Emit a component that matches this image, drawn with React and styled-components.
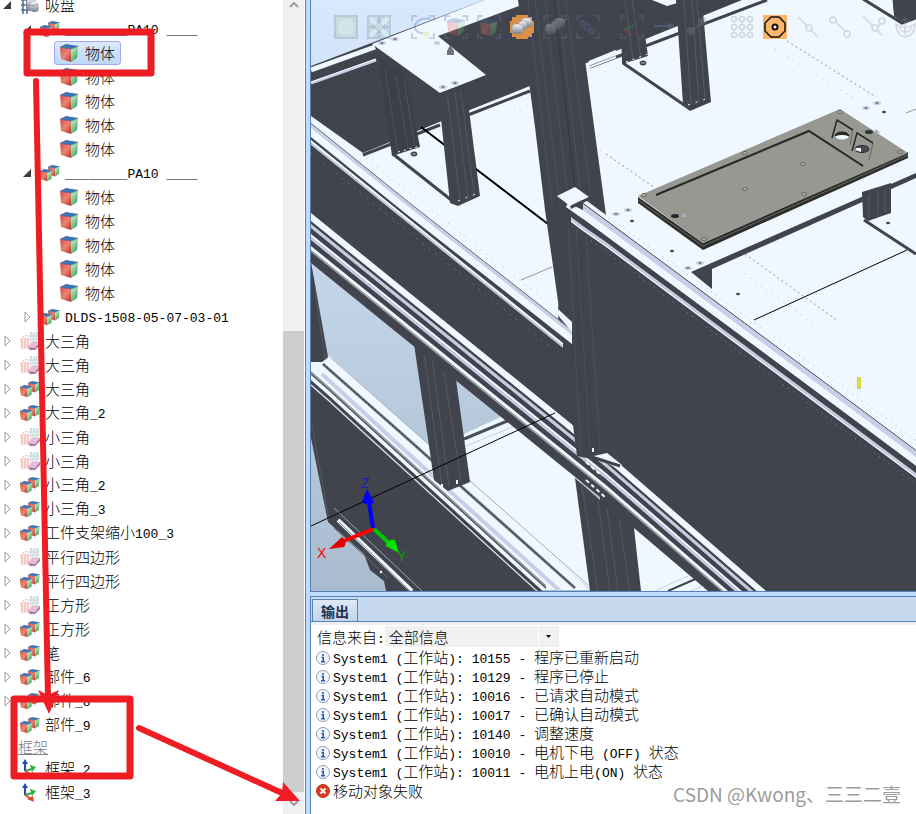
import React, { useState } from "react";
import styled, { createGlobalStyle } from "styled-components";

const treeItems = [
  { level: 0, arrow: "open", icon: "station", name: "吸盘" },
  { level: 1, arrow: "open", icon: "part", name: "________PA10 ____" },
  { level: 2, icon: "body", name: "物体" },
  { level: 2, icon: "body", name: "物体" },
  { level: 2, icon: "body", name: "物体" },
  { level: 2, icon: "body", name: "物体" },
  { level: 2, icon: "body", name: "物体" },
  { level: 1, arrow: "open", icon: "part", name: "________PA10 ____" },
  { level: 2, icon: "body", name: "物体" },
  { level: 2, icon: "body", name: "物体" },
  { level: 2, icon: "body", name: "物体" },
  { level: 2, icon: "body", name: "物体" },
  { level: 2, icon: "body", name: "物体" },
  { level: 1, arrow: "closed", icon: "part", name: "DLDS-1508-05-07-03-01" },
  { level: 0, arrow: "closed", icon: "hidden", name: "大三角" },
  { level: 0, arrow: "closed", icon: "hidden", name: "大三角" },
  { level: 0, arrow: "closed", icon: "part", name: "大三角" },
  { level: 0, arrow: "closed", icon: "part", name: "大三角_2" },
  { level: 0, arrow: "closed", icon: "hidden", name: "小三角" },
  { level: 0, arrow: "closed", icon: "hidden", name: "小三角" },
  { level: 0, arrow: "closed", icon: "part", name: "小三角_2" },
  { level: 0, arrow: "closed", icon: "part", name: "小三角_3" },
  { level: 0, arrow: "closed", icon: "part", name: "工件支架缩小100_3" },
  { level: 0, arrow: "closed", icon: "hidden", name: "平行四边形" },
  { level: 0, arrow: "closed", icon: "part", name: "平行四边形" },
  { level: 0, arrow: "closed", icon: "hidden", name: "正方形" },
  { level: 0, arrow: "closed", icon: "part", name: "正方形" },
  { level: 0, arrow: "closed", icon: "part", name: "笔" },
  { level: 0, arrow: "closed", icon: "part", name: "部件_6" },
  { level: 0, arrow: "closed", icon: "part", name: "部件_8" },
  { level: 0, icon: "part", name: "部件_9" },
];

const frameItems = [
  { level: 0, icon: "frame", name: "框架_2" },
  { level: 0, icon: "frame", name: "框架_3" },
];

const messages = [
  { type: "info", text: "System1 (工作站): 10155 - 程序已重新启动" },
  { type: "info", text: "System1 (工作站): 10129 - 程序已停止" },
  { type: "info", text: "System1 (工作站): 10016 - 已请求自动模式" },
  { type: "info", text: "System1 (工作站): 10017 - 已确认自动模式" },
  { type: "info", text: "System1 (工作站): 10140 - 调整速度" },
  { type: "info", text: "System1 (工作站): 10010 - 电机下电 (OFF) 状态" },
  { type: "info", text: "System1 (工作站): 10011 - 电机上电(ON) 状态" },
  { type: "error", text: "移动对象失败" },
];

const toolGroups = [
  ["view", "center"],
  ["curve", "surface", "body", "part", "mechanism", "group"],
  ["frame", "path", "target"],
  ["snapGrid", "snapCenter", "snapMid", "snapEnd", "snapEdge", "snapGravity"],
];

const dark = "#41444c";
const white = "#f0f8ff";
const lav = "#c9cde8";

// latin runs are set in a narrower mono face than the chinese ones
function MixedText({ children }) {
  return children
    .split(/([\x20-\x7e]+)/)
    .filter(Boolean)
    .map((run, i) =>
      /[\x20-\x7e]/.test(run) ? <Latin key={i}>{run}</Latin> : run
    );
}

function Cube({ x = 0, y = 0, s = 1 }) {
  return (
    <g transform={`translate(${x} ${y}) scale(${s})`}>
      <path d="M0 3 L6 0 L18 2 L11 5Z" fill="#3d74b0" />
      <path d="M0 3 L11 5 L11 18 L1 15Z" fill="url(#cubeRed)" />
      <path d="M11 5 L18 2 L17 14 L11 18Z" fill="url(#cubeGreen)" />
      <path d="M0 3 L11 5 L18 2" fill="none" stroke="#3a669c" strokeWidth="0.8" />
    </g>
  );
}

function SharedGradients() {
  return (
    <HiddenSvg aria-hidden="true">
      <defs>
        <linearGradient id="cubeRed" x1="0" y1="0" x2="1" y2="1">
          <stop offset="0" stopColor="#c9524c" />
          <stop offset="0.5" stopColor="#ee8272" />
          <stop offset="1" stopColor="#b03a34" />
        </linearGradient>
        <linearGradient id="cubeGreen" x1="0" y1="0" x2="0.6" y2="1">
          <stop offset="0" stopColor="#dff3dd" />
          <stop offset="0.6" stopColor="#7ccb86" />
          <stop offset="1" stopColor="#2f9a4c" />
        </linearGradient>
        <linearGradient id="metal" x1="0" y1="0" x2="0" y2="1">
          <stop offset="0" stopColor="#fafafa" />
          <stop offset="1" stopColor="#777c85" />
        </linearGradient>
      </defs>
    </HiddenSvg>
  );
}

function NodeIcon({ type }) {
  return (
    <svg width="20" height="20" viewBox="0 0 20 20" aria-hidden="true">
      {type === "body" && <Cube x={0} y={1} />}
      {type === "part" && (
        <>
          <Cube x={8} y={2} s={0.64} />
          <Cube x={0} y={6} s={0.68} />
        </>
      )}
      {type === "hidden" && (
        <>
          <path d="M0 7L9 6V17L1 18Z" fill="#fbe9e6" />
          <path d="M9 4L19 2V12L11 13Z" fill="#eaf3ee" />
          <g fill="none" strokeWidth="1" strokeDasharray="2 1">
            <path d="M1 9H11M1 12H11M1 15H10M2 7V18M5 7V18M8 7V18" stroke="#eeb4ae" />
            <path d="M2 6L8 4M10 3L18 2M9 5H19M11 1V9M14 1V9M17 1V9" stroke="#b5cbe6" />
            <path d="M12 8H19M12 11H19" stroke="#b5ddc0" />
          </g>
          <path d="M8 16L13 10L20 11L15 17Z" fill="#e2bfd9" />
          <path d="M8 16L15 17L20 11V14L15 19H10Z" fill="#a8769f" />
        </>
      )}
      {type === "station" && (
        <>
          <path d="M3 1V19M7 1V19M1 5H9M1 10H9M1 15H9" stroke="#5b6f92" strokeWidth="1.6" />
          <rect x="7" y="2" width="9" height="14" rx="4" fill="url(#metal)" />
          <rect x="10" y="7" width="9" height="10" rx="4" fill="url(#metal)" />
          <path d="M8 9C10 11 15 11 18 9" fill="none" stroke="#8b919b" />
        </>
      )}
      {type === "frame" && (
        <>
          <path d="M5 4V12" stroke="#1d4db4" strokeWidth="2" />
          <path d="M5 0L8 5H2Z" fill="#1d4db4" />
          <path d="M5 12L12 10" stroke="#2dae4b" strokeWidth="2" />
          <path d="M10 6L16 8L12 13Z" fill="#2dae4b" />
          <path d="M5 12L10 15" stroke="#e0492e" strokeWidth="2" />
          <path d="M7 16L13 13L14 19Z" fill="#e0492e" />
        </>
      )}
    </svg>
  );
}

function TreeRow({ item, selected, onSelect }) {
  return (
    <StyledRow $level={item.level} role="treeitem" aria-selected={selected}>
      <StyledArrow>
        {item.arrow === "open" && (
          <svg width="8" height="8" aria-hidden="true">
            <path d="M8 0V8H0Z" fill="#3c3c3c" />
          </svg>
        )}
        {item.arrow === "closed" && (
          <svg width="7" height="12" aria-hidden="true">
            <path d="M1 1L6 6L1 11Z" fill="#fff" stroke="#9a9a9a" />
          </svg>
        )}
      </StyledArrow>
      <StyledNode type="button" $selected={selected} onClick={onSelect}>
        <NodeIcon type={item.icon} />
        <StyledNodeName>
          <MixedText>{item.name}</MixedText>
        </StyledNodeName>
      </StyledNode>
    </StyledRow>
  );
}

function ToolIcon({ type }) {
  const isPart = type === "part";
  return (
    <svg width="24" height="24" viewBox="0 0 24 24" fill="none" aria-hidden="true">
      {(type === "view" || type === "center") && (
        <rect x="1" y="1" width="22" height="22" fill="#9cc59a" stroke="#6d8a91" strokeWidth="2" />
      )}
      {type === "view" && <rect x="4" y="4" width="16" height="16" rx="6" fill="#c8e6c0" />}
      {type === "center" && (
        <>
          <path d="M3 3L9 9M21 3L15 9M3 21L9 15M21 21L15 15" stroke="#e8f2f3" strokeWidth="4" />
          <path d="M12 2V7M12 22V17M2 12H7M22 12H17" stroke="#486a8e" strokeWidth="2" />
          <path d="M9 6H15L12 9ZM9 18H15L12 15ZM6 9V15L9 12ZM18 9V15L15 12Z" fill="#486a8e" />
        </>
      )}
      {["curve", "surface", "body", "part", "mechanism", "group", "frame"].includes(type) && (
        <path
          d="M1 6V1H6M18 1H23V6M23 18V23H18M6 23H1V18"
          stroke={isPart ? "#35406f" : "#67749f"}
          strokeWidth="2"
        />
      )}
      {type === "curve" && (
        <>
          <path d="M20 4C9 2 3 8 4 13C5 18 10 18 14 18" stroke="#3b6ea8" strokeWidth="2" />
          <circle cx="15" cy="19" r="3" fill="#e5d767" />
        </>
      )}
      {type === "surface" && <Cube x={3} y={3} s={1} />}
      {type === "body" && <Cube x={3} y={4} s={0.95} />}
      {(isPart || type === "mechanism") && (
        <g stroke="#8c9099" strokeWidth="0.5">
          <rect x="11" y="3" width="11" height="9" rx="4" fill="url(#metal)" />
          <rect x="8" y="6" width="9" height="9" rx="4" fill="url(#metal)" />
          <rect x="2" y="9" width="11" height="10" rx="4" fill="url(#metal)" />
        </g>
      )}
      {type === "group" && (
        <g stroke="#6669a8" strokeWidth="2">
          <circle cx="6" cy="8" r="2" />
          <circle cx="11" cy="12" r="3" />
          <circle cx="16" cy="16" r="2" />
        </g>
      )}
      {type === "frame" && (
        <>
          <path d="M4 15L14 10" stroke="#35a14c" strokeWidth="2" />
          <path d="M4 15L12 20" stroke="#cf3d3d" strokeWidth="2" />
        </>
      )}
      {type === "path" && <path d="M1 10H15V7L22 11L15 15V12H1Z" fill="#6b8cc0" />}
      {type === "target" && (
        <g stroke="#668fb5" strokeWidth="2">
          <path d="M8 14L16 8" />
          <circle cx="5" cy="16" r="3" fill="#b97b7b" />
          <circle cx="17" cy="6" r="3" fill="#b97b7b" />
        </g>
      )}
      {type === "snapGrid" && (
        <g stroke="#8c8c8c">
          <path d="M4 4H20V20H4ZM12 4V20M4 12H20" />
          {[4, 12, 20].map((cy) =>
            [4, 12, 20].map((cx) => (
              <circle key={`${cx}-${cy}`} cx={cx} cy={cy} r="2.5" fill={white} strokeWidth="1.5" />
            ))
          )}
        </g>
      )}
      {type === "snapCenter" && (
        <>
          <path d="M8 2H16L22 8V16L16 22H8L2 16V8Z" stroke="#15120e" strokeWidth="1.5" />
          <circle cx="12" cy="12" r="2.5" fill="#fff" stroke="#15120e" strokeWidth="2" />
        </>
      )}
      {["snapMid", "snapEnd", "snapEdge"].includes(type) && (
        <g stroke="#8c8c8c" strokeWidth="1.5">
          {type === "snapMid" && <path d="M2 2L22 22" />}
          {type === "snapEnd" && <path d="M4 4L19 19" />}
          {type === "snapEdge" && <path d="M1 1L20 20M14 14L22 5" />}
          {type === "snapEnd" ? (
            <>
              <circle cx="4" cy="5" r="3" fill={white} />
              <circle cx="18" cy="19" r="3" fill={white} />
            </>
          ) : (
            <circle cx="13" cy="13" r="3" fill={white} />
          )}
          {type === "snapEdge" && <circle cx="20" cy="6" r="3" fill={white} />}
        </g>
      )}
      {type === "snapGravity" && (
        <g stroke="#8c8c8c" strokeWidth="1.5">
          <path d="M1 9C1 26 20 26 20 9C14 13 7 13 1 9Z" />
          <path d="M4 11C5 19 16 19 17 11M10 4V20M6 6L10 3L14 6" />
        </g>
      )}
    </svg>
  );
}

// long extrusion rail: a polyline shifted down, from offset a to offset b
function Strip({ line, a, b, color }) {
  const top = line.map(([x, y]) => `${x},${y + a}`);
  const bottom = line.map(([x, y]) => `${x},${y + b}`).reverse();
  return <polygon points={[...top, ...bottom].join(" ")} fill={color} />;
}

const railBack = [[311, 123], [405, 199], [572, 330]];
const railFront = [[311, 213], [548, 405], [606, 452], [766, 591]];
const railRight = [[583, 203], [606, 220], [861, 409], [916, 450]];
const railLow = [[311, 386], [327, 400], [536, 591], [546, 600]];
const railFrontStrips = [
  [0, 8, white],
  [11, 14, lav],
  [14, 15, white],
  [21, 24, white],
  [24, 27, lav],
  [33, 37, white],
  [37, 39, "#9da3a5"],
];

const screws = [
  [382, 43], [395, 39], [443, 87], [455, 83], [616, 214], [628, 210],
  [688, 268], [700, 263], [866, 108], [877, 103],
];

function Scene() {
  return (
    <StyledScene viewBox="311 0 605 591" preserveAspectRatio="xMinYMin slice" aria-label="3D">
      <defs>
        <linearGradient id="sky" x1="0" y1="0" x2="0" y2="1">
          <stop offset="0" stopColor="#d8e9ff" />
          <stop offset="1" stopColor="#a9bccd" />
        </linearGradient>
        <linearGradient id="skyGap" gradientUnits="userSpaceOnUse" x1="0" y1="260" x2="0" y2="591">
          <stop offset="0" stopColor="#c4d6ea" />
          <stop offset="1" stopColor="#a9bccd" />
        </linearGradient>
      </defs>
      <rect x="311" y="0" width="605" height="591" fill="url(#sky)" />

      {/* back wall and floor */}
      <path d="M311 66L484 0H916V591H560L311 260Z" fill={dark} />
      <path d="M311 116L363 153L442 121L530 86L606 55L742 0H916V470L560 330L311 130Z" fill={white} />
      <path d="M363 155L440 125M468 115L530 91M590 67L767 0" stroke={dark} strokeWidth="3" />
      <path d="M311 70L375 47" stroke={white} strokeWidth="5" />
      <path d="M311 83L376 60" stroke={lav} strokeWidth="3" />
      <path d="M311 82L376 59" stroke={white} strokeWidth="1" />
      <path d="M311 91L380 67" stroke="#2b2d33" strokeDasharray="1 4" />

      {/* thin guides on the floor */}
      <path d="M421 127L548 224" stroke="#000" strokeWidth="2" />
      <path d="M754 320L907 250" stroke="#000" />
      <path d="M521 280L552 267M906 113L916 109" stroke="#9298a2" />
      <path d="M787 41L876 97M745 254L838 321M606 154L655 188" stroke="#8d929b" strokeDasharray="2 3" fill="none" />
      <path d="M775 49L855 99M733 265L822 331M366 158L560 312M514 106L532 118M600 150L615 160" stroke="#b3b8cb" strokeDasharray="1 6" />

      {/* table on the left */}
      <path d="M378 57L406 75L420 147L392 156Z" fill="#3d4048" />
      <path d="M385 70L398 152M396 75L408 149M404 80L415 147" stroke="#50535b" fill="none" />
      <path d="M398 152L420 146" stroke={white} strokeDasharray="2 4" />
      <path d="M393 154L455 203" stroke={dark} strokeWidth="3" />
      <path d="M438 91L466 86L480 196L458 206L450 203Z" fill={dark} />
      <path d="M447 93L460 200M455 92L468 197M461 92L474 194" stroke="#555860" />
      <path d="M458 201L478 193" stroke={white} strokeDasharray="2 6" />
      <path d="M372 44L484 0H519V6L438 36L486 75L440 93Z" fill={white} />
      <path d="M440 93L486 76V78L441 95Z" fill={dark} />
      <path d="M450 45L454 51V55H447V51Z" fill="#6f737d" />
      <ellipse cx="437" cy="43" rx="3" ry="2" fill={lav} />
      <ellipse cx="414" cy="154" rx="3" ry="2" fill="#777b84" stroke="#292b31" />

      {/* posts at the top */}
      <path d="M652 0L667 6L688 0Z" fill={white} />
      <path d="M620 0H640L648 56L622 64Z" fill={dark} />
      <path d="M625 0L633 61M632 0L641 58" stroke="#565961" />
      <path d="M623 63L690 109" stroke={dark} strokeWidth="3" />
      <path d="M626 62L648 54" stroke={white} strokeDasharray="2 5" />
      <path d="M676 0H702L711 102L690 111L683 104Z" fill={dark} />
      <path d="M684 0L691 104M692 0L699 102M697 0L705 100" stroke="#585b63" />
      <path d="M688 105L709 98" stroke={white} strokeDasharray="2 6" />
      <ellipse cx="643" cy="63" rx="3" ry="2" fill="#777b84" stroke="#292b31" />
      <path d="M863 -1L902 23L916 18V0H894L896 17" fill="none" stroke={dark} strokeWidth="3" />
      <path d="M893 0H916V17L902 22L894 16Z" fill={dark} />

      {/* main column */}
      <path d="M518 0H577L606 215L600 330L560 315L545 210L535 127Z" fill={dark} />
      <path
        d="M528 0L552 205M535 0L560 205M545 0L567 190M558 0L580 188M566 0L590 190"
        stroke="#4e5159"
        fill="none"
      />
      <path d="M554 0L575 188" stroke="#34363d" />
      <path d="M589 62L616 51M590 67L616 57" stroke={white} strokeWidth="2" />

      {/* carrier of the plate */}
      <path d="M691 272L916 173V178L712 269V289Z" fill={dark} />
      <path d="M862 192L891 183V213L868 221L863 217Z" fill={dark} />
      <path d="M869 195V218M878 192V215M885 190V212" stroke="#5a5d66" />
      <path d="M864 220L916 254" stroke={dark} strokeWidth="3" />

      {/* plate */}
      <path d="M638 197L703 243L908 152V158L703 250L638 203Z" fill="#2d2d2b" />
      <path d="M638 200L703 246L908 155" fill="none" stroke="#686963" />
      <path d="M638 196L840 109L908 153L703 243Z" fill="#979892" />
      <path d="M656 195L809 131L863 166" fill="none" stroke="#272725" strokeWidth="2" />
      <path d="M837 120L853 130L850 145M857 133L873 143L869 160" fill="none" stroke="#686962" />
      <path d="M832 138L837 120L853 130M852 151L857 133L873 143" fill="none" stroke="#272725" strokeWidth="1.5" />
      <ellipse cx="842" cy="136" rx="7" ry="3.5" fill={white} />
      <path d="M835 136A7 4 0 0 1 849 136A8 3 0 0 0 835 136Z" fill="#272725" stroke="#272725" />
      <ellipse cx="862" cy="149" rx="7" ry="3.5" fill="#484b53" stroke="#272725" />
      <path d="M855 150L861 152V148L856 148Z" fill={white} />
      <path d="M661 198L703 230" stroke="#7b7c77" strokeDasharray="1 4" />
      {[[644, 195], [840, 112], [900, 152], [704, 239], [745, 153], [745, 189], [803, 164], [804, 194]].map(
        ([cx, cy]) => (
          <ellipse key={`${cx}-${cy}`} cx={cx} cy={cy} rx="2.5" ry="1.5" fill="#b3b4ae" stroke="#63645f" />
        )
      )}
      <ellipse cx="675" cy="216" rx="4" ry="2" fill="#272725" />
      <ellipse cx="869" cy="132" rx="4" ry="2" fill="#33332f" />
      <path d="M683 212L687 217H682ZM876 129L880 133H874Z" fill="#a7acc8" />
      {[[672, 251], [738, 294], [632, 221], [884, 112], [888, 223]].map(([cx, cy]) => (
        <ellipse key={`${cx}-${cy}`} cx={cx} cy={cy} rx="2" ry="1.3" fill="#43464d" />
      ))}
      <rect x="857" y="377" width="4" height="12" fill="#c9cc8a" />
      <rect x="858" y="378" width="3" height="9" fill="#e0de38" />

      {/* sky under the front rail, left lower frame */}
      <path d="M311 255L600 410V591H311Z" fill="url(#skyGap)" />
      <path d="M464 434L516 410L580 468L592 591L465 480Z" fill={white} />
      <path d="M464 439L512 419" stroke="#4a4d54" strokeWidth="3" />
      <path d="M466 446L520 424" stroke={lav} />
      <path d="M311 262L328 357L322 365L311 372Z" fill={dark} />
      <path d="M315 290L325 358" stroke="#55585f" />
      <path d="M322 362L330 356L590 590H536L311 385V362Z" fill={white} />
      <path d="M311 384L540 591H386L384 581L370 570L364 554L328 522L311 438Z" fill={dark} />
      <Strip line={railLow} a={-2} b={0} color="#d9e1ee" />
      <Strip line={railLow} a={-6} b={-2} color={dark} />
      <Strip line={railLow} a={-13} b={-11} color="#4c4f57" />
      <Strip line={railLow} a={-15} b={-13} color="#8b9098" />
      <path d="M322 374L400 446L560 591" fill="none" stroke={lav} strokeWidth="4" />
      <path d="M323 364L332 372L400 432L575 588" fill="none" stroke="#6f747c" strokeWidth="3" />
      <path d="M323 364L332 372L400 432L575 588" fill="none" stroke="#33353b" strokeDasharray="3 1" />
      <path d="M330 357L400 419L588 585" fill="none" stroke="#a3a8bd" />
      <path d="M312 425L329 520" stroke="#555860" />
      <path d="M334 508L422 591" stroke="#9a9fb5" />
      <path d="M338 520L412 591" stroke={white} strokeWidth="4" />
      <path d="M339 522L412 593" stroke="#777c84" />
      <path d="M334 528L365 556L388 578" stroke="#686c74" fill="none" />
      <circle cx="381" cy="572" r="2" fill={white} stroke="#292b31" />
      <path d="M414 344L455 372L470 482L448 491L434 480Z" fill={dark} />
      <path d="M424 352L442 486M432 358L449 486M443 366L461 481" stroke="#575a63" />
      <path d="M457 484V480M442 487V484" stroke={white} strokeWidth="2" />
      <path d="M575 478L634 530L641 591H590Z" fill={dark} />
      <path d="M582 485L598 591M598 500L610 591M607 508L618 591M619 518L630 591" stroke="#555860" />
      <path d="M634 528L708 591H641Z" fill={white} />
      <path d="M668 591L700 577" stroke="#41444c" strokeWidth="2" />
      <path d="M655 591L690 575M690 591L704 586" stroke={lav} />

      {/* front panels and the rails round them */}
      <path d="M311 137L574 346L600 440L606 460L311 220Z" fill={dark} />
      <path d="M558 309L573 190L583 201L916 452V591H766L606 453L560 400Z" fill={dark} />
      <Strip line={railFront} a={0} b={50} color={dark} />
      {railFrontStrips.map(([a, b, color]) => (
        <Strip key={a} line={railFront} a={a} b={b} color={color} />
      ))}
      <path d="M563 348L573 346L595 440L620 466L600 461L577 456Z" fill={dark} />
      <Strip line={railBack} a={0} b={14} color={white} />
      <Strip line={railBack} a={0} b={1} color={dark} />
      <Strip line={railBack} a={1} b={5} color={lav} />
      <Strip line={[[311, 140], [563, 343]]} a={0} b={3} color={white} />
      <Strip line={[[311, 140], [563, 343]]} a={3} b={5} color={lav} />
      <path d="M311 153L552 348" stroke="#8d919a" strokeDasharray="1 7" />
      <path d="M545 300L558 309L572 322V332Z" fill={white} />

      <Strip line={railRight} a={-5} b={0} color={white} />
      <Strip line={railRight} a={0} b={16} color={white} />
      <Strip line={railRight} a={0} b={1} color="#292b31" />
      <Strip line={railRight} a={1} b={7} color={lav} />
      <Strip line={railRight} a={16} b={23} color={dark} />
      <Strip line={[[571, 217], [583, 226], [606, 242], [916, 473]]} a={0} b={3} color={lav} />
      <Strip line={[[571, 217], [583, 226], [606, 242], [916, 473]]} a={3} b={5} color={white} />
      <path d="M572 226L916 484" stroke="#858993" strokeDasharray="1 5" />
      <path d="M585 200L916 440" stroke="#b3b8cb" strokeDasharray="1 5" />
      <path d="M568 203L583 210V219L566 207Z" fill={white} />
      <path d="M557 196L575 187L589 197L570 206Z" fill={white} />
      <path d="M570 206L589 197V200L571 209Z" fill={dark} />
      <path d="M568 220L581 455M576 226L590 450M586 235L600 450" stroke="#4d5058" />
      <path d="M594 456L607 453L622 465L616 468Z" fill={white} />
      <path d="M595 458L620 466" stroke={dark} strokeWidth="3" />
      <path d="M593 448V455M586 462L602 476M586 480L606 498" stroke={white} strokeDasharray="4 3" strokeWidth="2" />

      {screws.map(([cx, cy]) => (
        <g key={`${cx}-${cy}`}>
          <ellipse cx={cx} cy={cy} rx="4" ry="2" fill={lav} />
          <ellipse cx={cx} cy={cy} rx="1.5" ry="1" fill="#6d717a" />
        </g>
      ))}
      <path d="M311 526L555 413" stroke="#000" />

      {/* axis triad */}
      <path d="M373 528L369 502" stroke="#0000fe" strokeWidth="4" />
      <path d="M367 489L374 502C371 505 365 505 362 502Z" fill="#0000fe" />
      <path d="M373 529L344 541" stroke="#fe0000" strokeWidth="4" />
      <path d="M329 549L342 537C346 540 346 545 344 547Z" fill="#e00000" />
      <path d="M374 529L390 544" stroke="#00c400" strokeWidth="4" />
      <path d="M399 553L386 546C386 542 391 539 395 540Z" fill="#00e400" />
      <AxisName x="317" y="558" fill="#f00">X</AxisName>
      <AxisName x="397" y="561" fill="#00a800">Y</AxisName>
      <AxisName x="361" y="488" fill="#1d1db4">Z</AxisName>
    </StyledScene>
  );
}

function MessageIcon({ type }) {
  if (type === "error") {
    return (
      <svg width="14" height="14" viewBox="0 0 14 14" aria-hidden="true">
        <circle cx="7" cy="7" r="6.5" fill="#dd3a1b" stroke="#b93a20" />
        <path d="M4.5 4.5L9.5 9.5M9.5 4.5L4.5 9.5" stroke="#fff" strokeWidth="2" />
      </svg>
    );
  }
  return (
    <svg width="14" height="14" viewBox="0 0 14 14" aria-hidden="true">
      <circle cx="7" cy="7" r="6.5" fill="#f4f8fd" stroke="#8d9cb4" />
      <path d="M7 3V5M5.5 6.5H7.2V10.5M5 10.8H9" fill="none" stroke="#2555c5" strokeWidth="1.6" />
    </svg>
  );
}

function Annotations() {
  return (
    <StyledAnnotations width="306" height="814" viewBox="0 0 306 814" aria-hidden="true">
      <g fill="none" stroke="#ee1d23" strokeWidth="7" strokeLinejoin="round" strokeLinecap="round">
        <rect x="27" y="32" width="124" height="41" />
        <rect x="14" y="699" width="116" height="77" />
        <path d="M36 81L48 698" strokeWidth="6" />
        <path d="M139 728L282 793" strokeWidth="6" />
      </g>
      <path d="M38 690L48 695L59 690L49 714Z" fill="#ee1d23" />
      <path d="M283 782L300 801L275 801L282 793Z" fill="#ee1d23" />
    </StyledAnnotations>
  );
}

export default function App() {
  const [selected, setSelected] = useState(2);

  return (
    <>
      <GlobalStyle />
      <SharedGradients />
      <StyledApp>
        <StyledSidebar>
          <StyledTree role="tree">
            {treeItems.map((item, i) => (
              <TreeRow
                key={i}
                item={item}
                selected={selected === i}
                onSelect={() => setSelected(i)}
              />
            ))}
            <StyledTreeHeading>框架</StyledTreeHeading>
            {frameItems.map((item, i) => (
              <TreeRow
                key={item.name}
                item={item}
                selected={selected === treeItems.length + i}
                onSelect={() => setSelected(treeItems.length + i)}
              />
            ))}
          </StyledTree>
          <StyledScrollbar>
            <StyledScrollButton type="button" aria-label="up" $height="10px">
              <svg width="10" height="6" aria-hidden="true">
                <path d="M1 5L5 1L9 5" fill="none" stroke="#9b9b9b" strokeWidth="2" />
              </svg>
            </StyledScrollButton>
            <StyledScrollTrack>
              <StyledScrollThumb />
            </StyledScrollTrack>
            <StyledScrollButton type="button" aria-label="down" $height="22px">
              <svg width="10" height="6" aria-hidden="true">
                <path d="M1 1L5 5L9 1" fill="none" stroke="#9b9b9b" strokeWidth="2" />
              </svg>
            </StyledScrollButton>
          </StyledScrollbar>
        </StyledSidebar>

        <StyledMain>
          <StyledView>
            <Scene />
            <StyledToolbar>
              {toolGroups.map((group) => (
                <StyledToolGroup key={group[0]}>
                  {group.map((tool) => (
                    <StyledTool
                      key={tool}
                      type="button"
                      aria-label={tool}
                      $active={tool === "part" || tool === "snapCenter"}
                      $color={tool === "part" ? "#dc9046" : "#fab46b"}
                    >
                      <ToolIcon type={tool} />
                    </StyledTool>
                  ))}
                </StyledToolGroup>
              ))}
            </StyledToolbar>
          </StyledView>

          <StyledOutput>
            <StyledTabs role="tablist">
              <StyledTab type="button" role="tab" aria-selected="true">
                输出
              </StyledTab>
            </StyledTabs>
            <StyledFilter>
              <label htmlFor="source">
                <MixedText>信息来自:</MixedText>
              </label>
              <StyledSelectBox>
                <StyledSelect id="source" defaultValue="all">
                  <option value="all">全部信息</option>
                </StyledSelect>
                <StyledSelectArrow aria-hidden="true">
                  <svg width="5" height="3">
                    <path d="M0 0H5L2.5 3Z" fill="#000" />
                  </svg>
                </StyledSelectArrow>
              </StyledSelectBox>
            </StyledFilter>
            <StyledLog>
              {messages.map((message) => (
                <StyledMessage key={message.text}>
                  <MessageIcon type={message.type} />
                  <span>
                    <MixedText>{message.text}</MixedText>
                  </span>
                </StyledMessage>
              ))}
            </StyledLog>
            <StyledWatermark>CSDN @Kwong、三三二壹</StyledWatermark>
          </StyledOutput>
        </StyledMain>
        <Annotations />
      </StyledApp>
    </>
  );
}

const GlobalStyle = createGlobalStyle`
  * {
    box-sizing: border-box;
  }

  body {
    margin: 0;
    background: #bfdbff;
    color: #000;
    font-family: "Noto Sans CJK SC", sans-serif;
    font-size: 15px;
    font-weight: 300;
  }

  button,
  select {
    font: inherit;
    color: inherit;
  }

  svg {
    flex-shrink: 0;
  }
`;

const HiddenSvg = styled.svg`
  position: absolute;
  width: 0;
  height: 0;
`;

const Latin = styled.span`
  font-family: "Liberation Mono", monospace;
  font-size: 13px;
  white-space: pre;
`;

const StyledApp = styled.div`
  position: relative;
  display: grid;
  grid-template-columns: 305px 1fr;
  height: 100vh;
  overflow: hidden;
`;

const StyledSidebar = styled.aside`
  display: flex;
  min-height: 0;
  background: #fff;
`;

const StyledTree = styled.div`
  flex: 1;
  min-width: 0;
  margin-top: -7px;
  overflow: hidden;
`;

const StyledRow = styled.div`
  display: flex;
  align-items: center;
  height: 24px;
  padding-left: ${(props) => props.$level * 20}px;
`;

const StyledArrow = styled.span`
  display: flex;
  justify-content: center;
  width: 14px;
  flex-shrink: 0;
`;

const StyledNode = styled.button`
  display: flex;
  align-items: center;
  gap: 5px;
  height: 24px;
  padding: 0 5px;
  border: 1px solid ${(props) => (props.$selected ? "#a5a5fb" : "transparent")};
  border-radius: 3px;
  background: ${(props) =>
    props.$selected ? "linear-gradient(#dce9fb, #bcd8f8)" : "transparent"};
`;

const StyledNodeName = styled.span`
  line-height: 22px;
  white-space: nowrap;
`;

const StyledTreeHeading = styled.div`
  height: 20px;
  padding-left: 18px;
  line-height: 20px;
  color: #808080;
  text-decoration: underline;
`;

const StyledScrollbar = styled.div`
  display: flex;
  flex-direction: column;
  width: 22px;
  background: #f0f0f0;
  border-right: 1px solid #fff;
`;

const StyledScrollButton = styled.button`
  display: flex;
  align-items: center;
  justify-content: center;
  height: ${(props) => props.$height};
  padding: 0;
  border: none;
  background: transparent;
`;

const StyledScrollTrack = styled.div`
  flex: 1;
  display: flex;
  flex-direction: column;
  justify-content: flex-end;
`;

const StyledScrollThumb = styled.div`
  height: 59%;
  background: #cdcdcd;
`;

const StyledMain = styled.main`
  display: flex;
  flex-direction: column;
  gap: 4px;
  min-width: 0;
  min-height: 0;
  padding-left: 4px;
  border-left: 1px solid #4f81bd;
`;

const StyledView = styled.section`
  position: relative;
  flex: 1;
  min-height: 0;
  border-left: 1px solid #5583b6;
  border-bottom: 1px solid #5583b6;
`;

const StyledScene = styled.svg`
  display: block;
  width: 100%;
  height: 100%;
`;

const AxisName = styled.text`
  font-family: "Liberation Sans", sans-serif;
  font-size: 14px;
  font-weight: 400;
`;

const StyledToolbar = styled.div`
  position: absolute;
  top: 15px;
  left: 23px;
  display: flex;
  gap: 20px;
`;

const StyledToolGroup = styled.div`
  display: flex;
  gap: 9px;
`;

const StyledTool = styled.button`
  width: 24px;
  height: 24px;
  padding: 0;
  border: none;
  background: ${(props) => (props.$active ? props.$color : "transparent")};
  opacity: ${(props) => (props.$active ? 1 : 0.3)};
`;

const StyledOutput = styled.section`
  position: relative;
  height: 218px;
  background: #fff;
  border-top: 1px solid #5583b6;
  border-left: 1px solid #5583b6;
`;

const StyledTabs = styled.div`
  display: flex;
  align-items: flex-end;
  height: 25px;
  padding-left: 1px;
  background: #c7d9ee;
  border-bottom: 1px solid #5583b6;
`;

const StyledTab = styled.button`
  height: 22px;
  padding: 0 8px;
  border: 1px solid #5583b6;
  border-bottom: none;
  background: linear-gradient(#dde8f4, #c5d4e6);
  color: #1e3250;
  font-size: 14px;
  font-weight: 700;
  line-height: 20px;
`;

const StyledFilter = styled.div`
  display: flex;
  align-items: center;
  height: 26px;
  padding-left: 6px;
  border-top: 3px solid #f0f0f0;
`;

const StyledSelectBox = styled.div`
  position: relative;
  width: 174px;
  height: 21px;
`;

const StyledSelect = styled.select`
  appearance: none;
  display: block;
  width: 100%;
  height: 100%;
  padding: 0 24px 0 4px;
  border: none;
  border-radius: 0;
  background: #f0f0f0;
  line-height: 21px;
`;

const StyledSelectArrow = styled.span`
  position: absolute;
  top: 0;
  right: 0;
  display: flex;
  align-items: center;
  justify-content: center;
  width: 21px;
  height: 100%;
  border-left: 1px solid #fff;
  pointer-events: none;
`;

const StyledLog = styled.ul`
  margin: 0;
  padding: 0 0 0 5px;
  list-style: none;
`;

const StyledMessage = styled.li`
  display: flex;
  align-items: center;
  gap: 3px;
  height: 19px;
  line-height: 19px;
  white-space: nowrap;
`;

const StyledWatermark = styled.div`
  position: absolute;
  right: 15px;
  bottom: 5px;
  color: #9c9c9c;
  font-size: 19px;
  font-weight: 400;
  line-height: 30px;
`;

const StyledAnnotations = styled.svg`
  position: absolute;
  top: 0;
  left: 0;
  pointer-events: none;
`;
